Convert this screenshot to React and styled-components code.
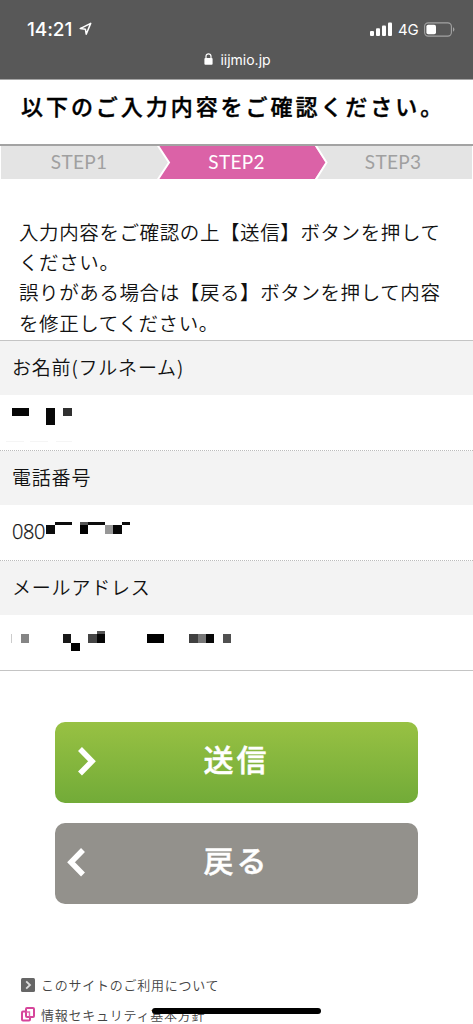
import React from "react";
import styled, { createGlobalStyle } from "styled-components";

const fields = [
    {
        label: "お名前(フルネーム)",
        text: "",
        mask: [
            [12, 13, 17, 8, "#060606"],
            [46, 13, 9, 17, "#080808"],
            [63, 13, 9, 8, "#303030"],
            [6, 46, 18, 1, "#f5f5f5"],
            [30, 46, 18, 1, "#f5f5f5"],
            [56, 46, 16, 1, "#f5f5f5"],
        ],
    },
    {
        label: "電話番号",
        text: "080",
        mask: [
            [46, 20, 9, 9, "#0c0c0c"],
            [55, 17, 17, 3, "#0c0c0c"],
            [80, 17, 8, 3, "#555"],
            [80, 20, 8, 9, "#000"],
            [88, 17, 17, 3, "#0c0c0c"],
            [105, 20, 8, 9, "#979797"],
            [113, 20, 9, 9, "#080808"],
            [122, 17, 8, 3, "#0c0c0c"],
        ],
    },
    {
        label: "メールアドレス",
        text: "",
        mask: [
            [11, 19, 1, 9, "#ccc"],
            [21, 19, 8, 9, "#858585"],
            [63, 19, 8, 9, "#181818"],
            [71, 28, 9, 8, "#000"],
            [88, 19, 9, 9, "#454545"],
            [97, 16, 8, 3, "#555"],
            [97, 19, 8, 9, "#060606"],
            [147, 19, 17, 9, "#000"],
            [189, 19, 9, 9, "#404040"],
            [198, 19, 8, 9, "#777"],
            [206, 19, 8, 9, "#080808"],
            [223, 19, 8, 9, "#505050"],
        ],
    },
];

const StatusBar = () => (
    <StatusRow>
        <Clock>14:21</Clock>
        <svg width="13" height="14" viewBox="0 0 13 14">
            <path
                d="M1.2 6.6 11.7 1.4 7.2 12.2 6.4 7.2Z"
                fill="none"
                stroke="#fff"
                strokeWidth="1.5"
                strokeLinejoin="round"
            />
        </svg>
        <Spacer />
        <svg width="22" height="14" viewBox="0 0 22 14" fill="#fff">
            <rect x="0" y="9" width="4" height="5" rx="1" />
            <rect x="6" y="6.3" width="4" height="7.7" rx="1" />
            <rect x="12" y="3.5" width="4" height="10.5" rx="1" />
            <rect x="18" y="0.5" width="4" height="13.5" rx="1" />
        </svg>
        <Network>4G</Network>
        <svg width="31" height="15" viewBox="0 0 31 15">
            <rect
                x="0.6"
                y="0.9"
                width="26.8"
                height="13.2"
                rx="3.6"
                fill="none"
                stroke="#a2a2a2"
                strokeWidth="1.1"
            />
            <rect x="2.4" y="2.7" width="9.6" height="9.6" rx="1.8" fill="#fff" />
            <path d="M29 5.3v4.4q1.4-.6 1.4-2.2T29 5.3Z" fill="#a2a2a2" />
        </svg>
    </StatusRow>
);

const Steps = () => (
    <StepBar>
        <Step $width={156}>STEP1</Step>
        <Arrow viewBox="0 0 15 33">
            <path d="M0 0H15V33H0Z" fill="#db62a7" />
            <path d="M0 0H1L12 16.5 1 33H0Z" fill="#e4e4e4" />
            <path d="M.5 -1 12 16.5 .5 34" fill="none" stroke="#fff" strokeWidth="2" />
        </Arrow>
        <Step $active $width={141} $shift={12}>
            STEP2
        </Step>
        <Arrow viewBox="0 0 15 33">
            <path d="M0 0H15V33H0Z" fill="#e4e4e4" />
            <path d="M0 0H2L13 16.5 2 33H0Z" fill="#db62a7" />
            <path d="M2.5 -1 13.5 16.5 2.5 34" fill="none" stroke="#fff" strokeWidth="2" />
        </Arrow>
        <Step $width={144} $shift={14}>
            STEP3
        </Step>
    </StepBar>
);

const Mask = ({ blocks }) => (
    <MaskSvg width="240" height="55" shapeRendering="crispEdges">
        {blocks.map(([x, y, w, h, fill]) => (
            <rect key={`${x}-${y}`} x={x} y={y} width={w} height={h} fill={fill} />
        ))}
    </MaskSvg>
);

const App = () => {
    return (
        <Screen>
            <GlobalStyle />
            <Browser>
                <StatusBar />
                <Address>
                    <svg width="9" height="12" viewBox="0 0 9 12">
                        <rect x="0.4" y="5" width="8.2" height="6.8" rx="1" fill="#fff" />
                        <path
                            d="M2 5.5V3.3a2.5 2.5 0 0 1 5 0v2.2"
                            fill="none"
                            stroke="#fff"
                            strokeWidth="1.2"
                        />
                    </svg>
                    iijmio.jp
                </Address>
            </Browser>
            <Title>以下のご入力内容をご確認ください。</Title>
            <Steps />
            <Lead>
                入力内容をご確認の上【送信】ボタンを押して
                <br />
                ください。
                <br />
                誤りがある場合は【戻る】ボタンを押して内容
                <br />
                を修正してください。
            </Lead>
            <Form>
                {fields.map((field) => (
                    <Field key={field.label}>
                        <Label>{field.label}</Label>
                        <Value>
                            {field.text}
                            <Mask blocks={field.mask} />
                        </Value>
                    </Field>
                ))}
            </Form>
            <Actions>
                <Button $primary>
                    <Chevron $left={22} viewBox="0 0 19 29">
                        <path d="M3 2 15 14.3 3 26.5" />
                    </Chevron>
                    送信
                </Button>
                <Button>
                    <Chevron $left={11} viewBox="0 0 19 29">
                        <path d="M17 2 5 14.3 17 26.5" />
                    </Chevron>
                    戻る
                </Button>
            </Actions>
            <Footer>
                <FooterLink>
                    <svg width="14" height="14" viewBox="0 0 14 14">
                        <rect width="14" height="14" rx="1.5" fill="#666" />
                        <path
                            d="M5.2 3.3 9 7 5.2 10.7"
                            fill="none"
                            stroke="#ddd"
                            strokeWidth="1.8"
                        />
                    </svg>
                    このサイトのご利用について
                </FooterLink>
                <FooterLink>
                    <svg width="14" height="15" viewBox="0 0 14 15">
                        <rect x="1" y="4.5" width="8" height="9" rx="1" fill="#fff" stroke="#d6459b" strokeWidth="2" />
                        <rect x="5" y="1" width="8" height="9" rx="1" fill="#fff" stroke="#d6459b" strokeWidth="2" />
                        <path d="M5.5 5h3v4.5" fill="none" stroke="#df69af" strokeWidth="1.4" />
                    </svg>
                    情報セキュリティ基本方針
                </FooterLink>
            </Footer>
            <HomeIndicator />
        </Screen>
    );
};

const GlobalStyle = createGlobalStyle`
    * {
        box-sizing: border-box;
    }
    body {
        margin: 0;
        background: #fff;
    }
    svg {
        display: block;
        flex-shrink: 0;
    }
`;
const Screen = styled.div`
    position: relative;
    width: 473px;
    height: 1024px;
    overflow: hidden;
    background: #fff;
    color: #111;
    font-family: "Noto Sans CJK JP", sans-serif;
`;
const Browser = styled.header`
    height: 80px;
    padding-top: 18px;
    background: #585858;
    border-bottom: 1px solid #a5a5a5;
    color: #fff;
    font-family: Inter, sans-serif;
`;
const StatusRow = styled.div`
    height: 22px;
    padding: 0 18px 0 27px;
    display: flex;
    align-items: center;
`;
const Clock = styled.span`
    width: 52px;
    font-size: 19px;
    font-weight: 500;
    letter-spacing: -0.1px;
`;
const Spacer = styled.div`
    flex: 1;
`;
const Network = styled.span`
    width: 26px;
    margin: 0 0 0 6px;
    font-size: 15px;
    font-weight: 400;
    letter-spacing: -0.3px;
`;
const Address = styled.div`
    height: 22px;
    margin-top: 8px;
    padding-left: 2px;
    display: flex;
    align-items: center;
    justify-content: center;
    gap: 7px;
    font-size: 14px;
`;
const Title = styled.h1`
    height: 64px;
    margin: 0;
    padding-left: 21px;
    font-size: 22px;
    font-weight: 500;
    line-height: 51px;
    letter-spacing: 2.95px;
    white-space: nowrap;
    color: #000;
    -webkit-text-stroke: 0.4px #000;
`;
const StepBar = styled.div`
    height: 35px;
    padding: 0 1px;
    display: flex;
    border-top: 2px solid #a3a3a3;
`;
const Step = styled.div`
    width: ${({ $width }) => $width}px;
    padding-right: ${({ $shift }) => $shift || 0}px;
    background: ${({ $active }) => ($active ? "#db62a7" : "#e4e4e4")};
    color: ${({ $active }) => ($active ? "#fff" : "#a0a0a0")};
    font-family: Lato, sans-serif;
    font-size: 19px;
    font-weight: 400;
    line-height: 31px;
    letter-spacing: 0.3px;
    text-align: center;
`;
const Arrow = styled.svg`
    width: 15px;
    height: 33px;
`;
const Lead = styled.p`
    height: 161px;
    margin: 0;
    padding: 38px 0 0 19px;
    font-size: 19.5px;
    font-weight: 350;
    line-height: 30.2px;
    letter-spacing: 0.6px;
    white-space: nowrap;
`;
const Form = styled.dl`
    margin: 0;
    border-top: 1px solid #c4c4c4;
    border-bottom: 1px solid #c4c4c4;
`;
const Field = styled.div`
    & + & {
        border-top: 1px dotted #bbb;
    }
`;
const Label = styled.dt`
    height: 54px;
    padding-left: 12px;
    background: #f3f3f3;
    font-size: 19px;
    font-weight: 350;
    line-height: 51px;
    letter-spacing: 0.8px;
`;
const Value = styled.dd`
    position: relative;
    height: 55px;
    margin: 0;
    padding-left: 12px;
    font-family: "Open Sans", sans-serif;
    font-size: 20px;
    font-weight: 300;
    line-height: 54px;
    letter-spacing: -0.4px;
    -webkit-text-stroke: 0.25px #111;
`;
const MaskSvg = styled.svg`
    position: absolute;
    top: 0;
    left: 0;
`;
const Actions = styled.div`
    padding: 51px 55px 0;
    display: flex;
    flex-direction: column;
    gap: 20px;
`;
const Button = styled.button`
    position: relative;
    height: 81px;
    padding: 0 0 10px 0;
    border: none;
    border-radius: 10px;
    background: ${({ $primary }) =>
        $primary ? "linear-gradient(#98c143, #72ab38)" : "#93918c"};
    color: #fff;
    font-family: inherit;
    font-size: 30px;
    font-weight: 500;
    letter-spacing: 3px;
    -webkit-text-stroke: 0.5px #fff;
`;
const Chevron = styled.svg`
    position: absolute;
    top: 25px;
    left: ${({ $left }) => $left}px;
    width: 19px;
    height: 29px;
    fill: none;
    stroke: #fff;
    stroke-width: 5.5;
`;
const Footer = styled.footer`
    padding: 67px 0 0 21px;
`;
const FooterLink = styled.div`
    height: 30px;
    display: flex;
    align-items: center;
    gap: 6px;
    color: #444;
    font-size: 13px;
    font-weight: 350;
    line-height: 18px;
    padding-bottom: 3px;
    letter-spacing: 0.75px;
    white-space: nowrap;
`;
const HomeIndicator = styled.div`
    position: absolute;
    left: 152px;
    bottom: 10px;
    width: 169px;
    height: 6px;
    border-radius: 3px;
    background: #000;
`;

export default App;
